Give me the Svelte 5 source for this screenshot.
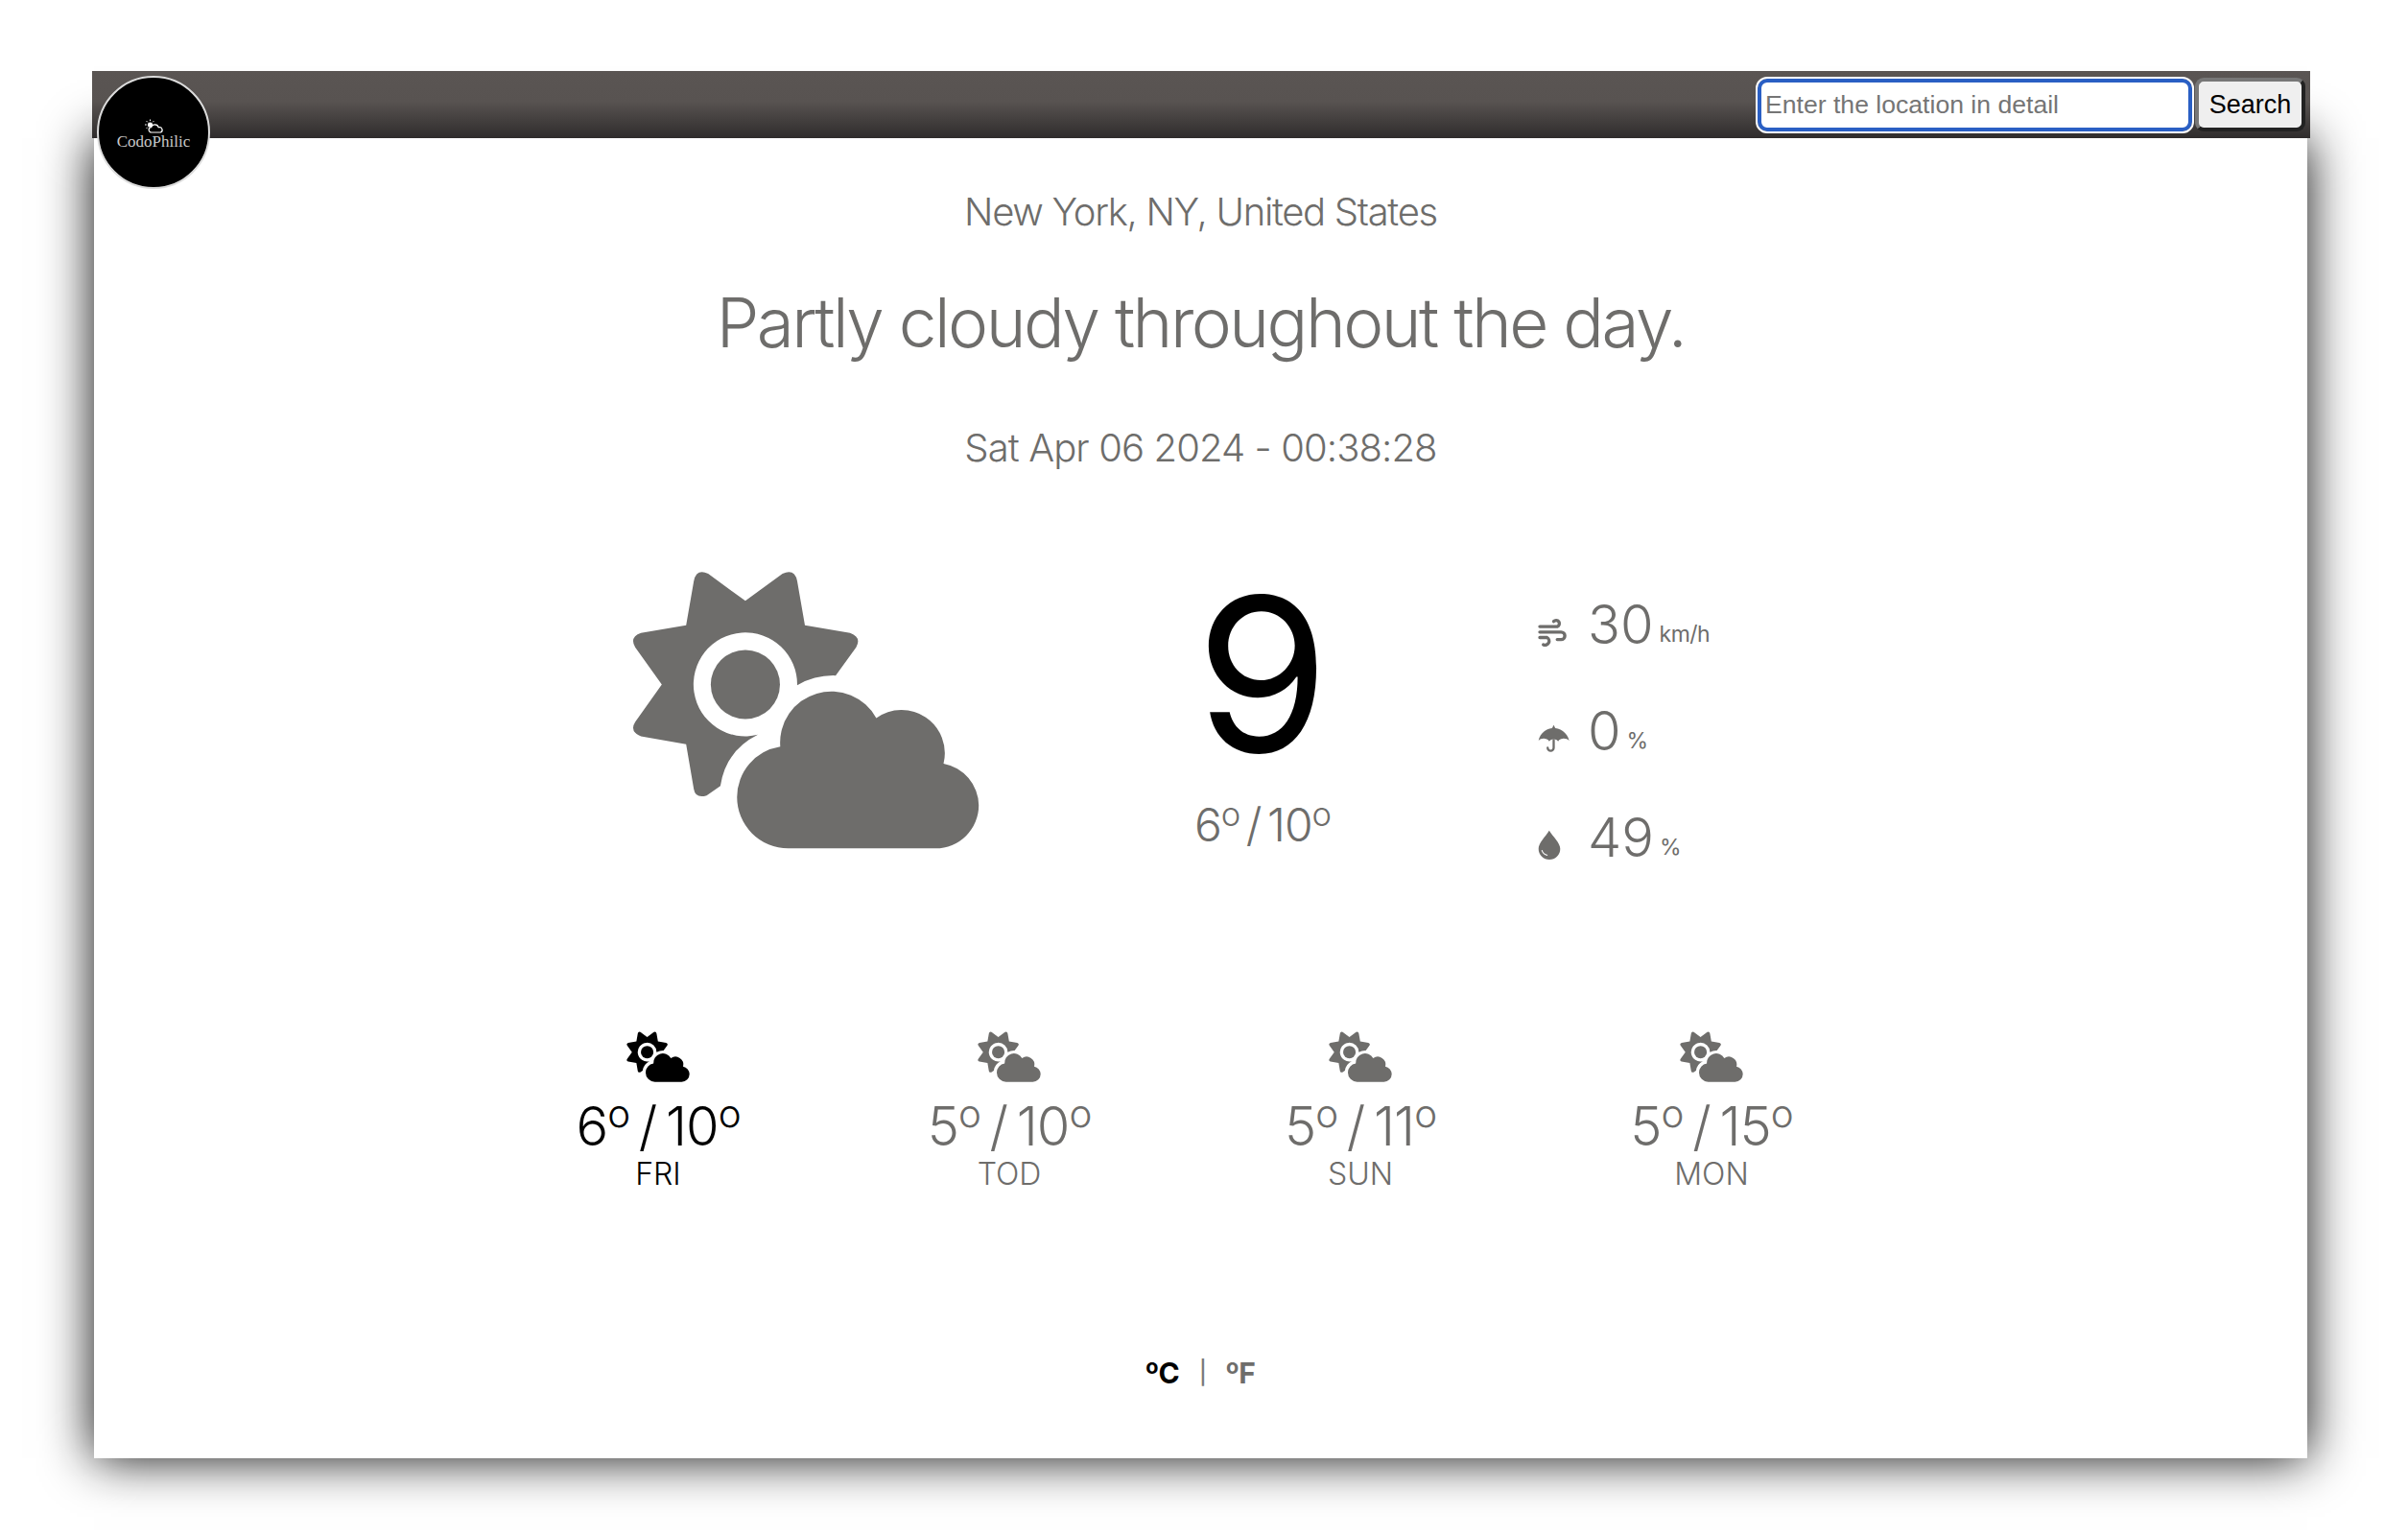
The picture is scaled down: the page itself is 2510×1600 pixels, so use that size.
<script>
  const forecast = [
    { low: 6, high: 10, day: "FRI", active: true },
    { low: 5, high: 10, day: "TOD" },
    { low: 5, high: 11, day: "SUN" },
    { low: 5, high: 15, day: "MON" }
  ];
</script>

<svg class="defs" width="0" height="0" aria-hidden="true">
  <symbol id="partly" viewBox="55 40 1090 875">
    <path d="M411 137 L527 52 Q565 35 573 75 L597 213 L738 237 Q775 250 757 282 L693 370 Q630 368 573 400 A162 162 0 1 0 450 555 Q350 605 333 715 L290 745 Q255 755 250 725 L226 585 L85 560 Q48 545 67 515 L150 398 L67 282 Q48 250 85 237 L226 213 L250 75 Q258 35 295 52 Z" />
    <circle cx="411" cy="398" r="108" />
    <path d="M545 910 A160 160 0 0 1 385 750 A160 160 0 0 1 520 592 A160 160 0 0 1 820 503 A135 135 0 0 1 1030 645 A135 135 0 0 1 1140 775 A135 135 0 0 1 1005 910 Z" />
  </symbol>
</svg>

<div class="page">
  <header>
    <div class="logo">
      <svg class="logo-icon" viewBox="0 0 21 15" aria-hidden="true">
        <circle cx="6.5" cy="6" r="2.6" fill="#fff" />
        <path d="M6.5 .5v1.6M1 6h1.8M2.6 2.1l1.2 1.2M10.4 2.1l-1.2 1.2M2.6 9.9l1.2-1.2" stroke="#fff" stroke-width="1" fill="none" />
        <path d="M8 14 a2.7 2.7 0 0 1 -.3 -5.4 a4 4 0 0 1 7.6 .2 a2.7 2.7 0 0 1 2 5.2 Z" fill="#000" stroke="#fff" stroke-width="1.2" />
      </svg>
      <span>CodoPhilic</span>
    </div>
    <form class="search" on:submit|preventDefault>
      <input type="text" placeholder="Enter the location in detail" />
      <button type="submit">Search</button>
    </form>
  </header>

  <main>
    <p class="location">New York, NY, United States</p>
    <h1>Partly cloudy throughout the day.</h1>
    <p class="date">Sat Apr 06 2024 - 00:38:28</p>

    <section class="current">
      <svg class="big-icon"><use href="#partly" /></svg>
      <div class="temp">
        <div class="now">9</div>
        <div class="range">6<sup>o</sup> / 10<sup>o</sup></div>
      </div>
      <div class="stats">
        <div class="stat">
          <svg class="ic" viewBox="98 125 92 95" preserveAspectRatio="xMinYMid" aria-hidden="true">
            <g fill="none" stroke="currentColor" stroke-width="10" stroke-linecap="round">
              <path d="M104 155 H158 a10 10 0 1 0 -11 -16" />
              <path d="M104 172 H170 a11.5 11.5 0 0 1 0 23 H158" />
              <path d="M104 189 H126 a11 11 0 1 1 -11 22" />
            </g>
          </svg>
          <span class="num">30</span><span class="unit">km/h</span>
        </div>
        <div class="stat">
          <svg class="ic" viewBox="98 460 100 95" preserveAspectRatio="xMinYMid" aria-hidden="true">
            <path d="M100 514 C104 491 124 476 143 474 L148 464 L153 474 C172 476 192 491 197 514 C188 505 170 504 162 516 C156 507 140 507 134 516 C126 504 108 505 100 514 Z" fill="currentColor" />
            <path d="M148 512 V536 a9.5 9.5 0 0 1 -19 0" fill="none" stroke="currentColor" stroke-width="7" stroke-linecap="round" />
          </svg>
          <span class="num">0</span><span class="unit">%</span>
        </div>
        <div class="stat">
          <svg class="ic" viewBox="98 795 69 92" preserveAspectRatio="xMinYMid" aria-hidden="true">
            <path d="M132 797 C120 816 100 834 100 852 a32.5 32.5 0 0 0 65 0 C165 834 144 816 132 797 Z" fill="currentColor" />
            <path d="M110 856 q3 13 17 15" fill="none" stroke="#fff" stroke-width="3" />
          </svg>
          <span class="num">49</span><span class="unit">%</span>
        </div>
      </div>
    </section>

    <section class="forecast">
      {#each forecast as f}
        <div class="day" class:active={f.active}>
          <svg class="small-icon"><use href="#partly" /></svg>
          <div class="day-range">{f.low}<sup>o</sup> / {f.high}<sup>o</sup></div>
          <div class="day-name">{f.day}</div>
        </div>
      {/each}
    </section>

    <div class="units">
      <span class="active"><sup>o</sup>C</span>
      <span class="sep">|</span>
      <span><sup>o</sup>F</span>
    </div>
  </main>
</div>

<style>
  :global(body) {
    background: #fff;
    font-family: Inter, "Liberation Sans", sans-serif;
  }
  .defs {
    position: absolute;
  }
  .page {
    padding-top: 74px;
    height: 1526px;
    overflow: hidden;
  }
  header {
    position: relative;
    z-index: 2;
    height: 70px;
    margin: 0 102px 0 96px;
    display: flex;
    justify-content: flex-end;
    align-items: center;
    background: linear-gradient(#5a5553 0%, #585351 45%, #2f2c2c 100%);
  }
  .logo {
    position: absolute;
    left: 5px;
    top: 5px;
    width: 114px;
    height: 71px;
    padding-top: 43px;
    border: 2px solid #dcdcdc;
    border-radius: 50%;
    background: #000;
    color: #c8c8c8;
    font-family: "Liberation Serif", serif;
    font-size: 17px;
    line-height: 18px;
    display: flex;
    flex-direction: column;
    align-items: center;
  }
  .logo-icon {
    width: 21px;
    height: 15px;
    flex: none;
  }
  .search {
    display: flex;
    align-items: center;
    gap: 3px;
    padding-right: 5px;
  }
  input {
    width: 437px;
    height: 47px;
    box-sizing: content-box;
    padding: 0 4px;
    border: 4px solid #2a5fc4;
    border-radius: 10px;
    outline: 2px solid #fff;
    outline-offset: 0;
    background: #fff;
    font-family: "Liberation Sans", sans-serif;
    font-size: 26.6px;
  }
  input::placeholder {
    color: #757575;
  }
  button {
    width: 115px;
    height: 56px;
    box-sizing: border-box;
    padding: 0;
    border: 4px solid;
    border-color: #777 #222 #222 #777;
    border-radius: 9px;
    background: #efefef;
    color: #000;
    font-family: "Liberation Sans", sans-serif;
    font-size: 27px;
  }
  main {
    margin: 0 105px 0 98px;
    height: 1376px;
    background: #fff;
    box-shadow: 0 0 50px rgba(0, 0, 0, 0.95);
    color: #6e6d6b;
    text-align: center;
    padding-top: 51px;
    box-sizing: border-box;
  }
  p,
  h1 {
    margin: 0;
    font-weight: 350;
  }
  .location,
  .date {
    font-size: 40px;
    line-height: 52px;
  }
  .location {
    letter-spacing: -1.3px;
  }
  .date {
    letter-spacing: -0.9px;
  }
  h1 {
    font-size: 71px;
    line-height: 84px;
    letter-spacing: -2.5px;
    margin-top: 47px;
    margin-bottom: 63px;
  }
  sup {
    font-size: 0.72em;
    line-height: 0;
    vertical-align: 0.46em;
  }
  .current {
    display: flex;
    margin-top: 101px;
    padding-left: 560px;
    text-align: left;
  }
  .big-icon {
    width: 364px;
    height: 292px;
    fill: currentColor;
    flex: none;
  }
  .temp {
    width: 410px;
    margin-left: 89px;
    text-align: center;
    flex: none;
  }
  .now {
    color: #000;
    font-size: 224px;
    font-weight: 400;
    line-height: 218px;
  }
  .range {
    font-size: 48px;
    font-weight: 300;
    line-height: 60px;
    margin-top: 18px;
    letter-spacing: -1px;
    word-spacing: -6px;
  }
  .stats {
    margin-top: -20px;
    margin-left: 80px;
  }
  .stat {
    display: flex;
    align-items: flex-end;
    height: 111px;
  }
  .ic {
    width: 33px;
    height: 32px;
    margin: 0 19px 10px 2px;
    flex: none;
  }
  .num {
    font-size: 56px;
    font-weight: 300;
    line-height: 68px;
  }
  .unit {
    font-size: 23px;
    font-weight: 400;
    margin-left: 6px;
    margin-bottom: 10px;
    letter-spacing: -0.5px;
  }
  .forecast {
    display: grid;
    grid-template-columns: repeat(4, 366px);
    margin: 168px 0 0 405px;
  }
  .day.active {
    color: #000;
  }
  .small-icon {
    display: block;
    width: 66px;
    height: 53px;
    margin: 0 auto;
    fill: currentColor;
  }
  .day-range {
    font-size: 56px;
    font-weight: 300;
    line-height: 64px;
    margin-top: 14px;
    letter-spacing: -1px;
    word-spacing: -5px;
  }
  .day-name {
    font-size: 32px;
    font-weight: 350;
    line-height: 36px;
  }
  .units {
    margin-top: 169px;
    font-size: 30px;
    font-weight: 700;
    display: flex;
    justify-content: center;
    gap: 20px;
    line-height: 40px;
  }
  .units .active {
    color: #000;
  }
  .sep {
    font-size: 24px;
    font-weight: 500;
    color: #7a7a7a;
  }
</style>
